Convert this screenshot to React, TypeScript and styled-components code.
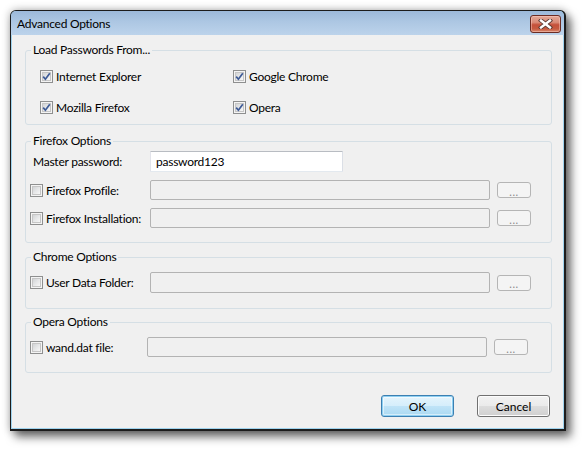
import React from "react";
import styled, { createGlobalStyle } from "styled-components";

const GlobalStyle = createGlobalStyle`
  html, body {
    margin: 0;
    padding: 0;
    background: #ffffff;
  }
  body {
    font-family: Lato, "Noto Sans", sans-serif;
    font-size: 12px;
    letter-spacing: -0.25px;
    color: #000000;
  }
`;

export default function App() {
  return (
    <>
      <GlobalStyle />
      <Page>
        <Window>
          <TitleBar>
            <TitleText>Advanced Options</TitleText>
            <CloseButton aria-label="Close">
              <svg width="17" height="10" viewBox="0 0 17 10">
                <path d="M4 1.5 L13 8.5 M13 1.5 L4 8.5" stroke="#5a3a34" strokeWidth="4.2" strokeLinecap="square" fill="none" />
                <path d="M4 1.5 L13 8.5 M13 1.5 L4 8.5" stroke="#ffffff" strokeWidth="2.4" strokeLinecap="square" fill="none" />
              </svg>
            </CloseButton>
          </TitleBar>

          <Client>
            <Group $top={7}>
              <Legend>Load Passwords From...</Legend>
              <GroupBody $pt={8} $pb={6} $pl={14}>
                <BrowserGrid>
                  <CheckLabel>
                    <CheckBox checked />
                    <CheckText>Internet Explorer</CheckText>
                  </CheckLabel>
                  <CheckLabel>
                    <CheckBox checked />
                    <CheckText>Google Chrome</CheckText>
                  </CheckLabel>
                  <CheckLabel>
                    <CheckBox checked />
                    <CheckText>Mozilla Firefox</CheckText>
                  </CheckLabel>
                  <CheckLabel>
                    <CheckBox checked />
                    <CheckText>Opera</CheckText>
                  </CheckLabel>
                </BrowserGrid>
              </GroupBody>
            </Group>

            <Group $top={8}>
              <Legend>Firefox Options</Legend>
              <GroupBody $pt={2} $pb={14} $pl={4}>
                <FieldRows>
                  <FieldRow $h={21}>
                    <LabelCell $w={120}>
                      <PlainLabel>Master password:</PlainLabel>
                    </LabelCell>
                    <TextBox $w={193} value="password123" readOnly />
                  </FieldRow>
                  <FieldRow $h={20}>
                    <LabelCell $w={120}>
                      <CheckBox />
                      <CheckText>Firefox Profile:</CheckText>
                    </LabelCell>
                    <DisabledBox $w={340} />
                    <BrowseButton disabled>...</BrowseButton>
                  </FieldRow>
                  <FieldRow $h={20}>
                    <LabelCell $w={120}>
                      <CheckBox />
                      <CheckText>Firefox Installation:</CheckText>
                    </LabelCell>
                    <DisabledBox $w={340} />
                    <BrowseButton disabled>...</BrowseButton>
                  </FieldRow>
                </FieldRows>
              </GroupBody>
            </Group>

            <Group $top={6}>
              <Legend>Chrome Options</Legend>
              <GroupBody $pt={7} $pb={15} $pl={4}>
                <FieldRow $h={21}>
                  <LabelCell $w={120}>
                    <CheckBox />
                    <CheckText>User Data Folder:</CheckText>
                  </LabelCell>
                  <DisabledBox $w={340} />
                  <BrowseButton disabled>...</BrowseButton>
                </FieldRow>
              </GroupBody>
            </Group>

            <Group $top={5}>
              <Legend>Opera Options</Legend>
              <GroupBody $pt={7} $pb={15} $pl={4}>
                <FieldRow $h={20}>
                  <LabelCell $w={117}>
                    <CheckBox />
                    <CheckText>wand.dat file:</CheckText>
                  </LabelCell>
                  <DisabledBox $w={340} />
                  <BrowseButton disabled>...</BrowseButton>
                </FieldRow>
              </GroupBody>
            </Group>

            <ButtonRow>
              <DialogButton $default>OK</DialogButton>
              <DialogButton>Cancel</DialogButton>
            </ButtonRow>
          </Client>
        </Window>
      </Page>
    </>
  );
}

function CheckBox({ checked }: { checked?: boolean }) {
  return (
    <Box>
      <BoxInner>
        {checked && (
          <svg width="9" height="9" viewBox="0 0 9 9">
            <path d="M1.2 4.6 L3.4 7.2 L7.8 1.2" stroke="#3d5a96" strokeWidth="1.7" fill="none" />
          </svg>
        )}
      </BoxInner>
    </Box>
  );
}

/* ── Page + window frame ── */
const Page = styled.div`
  box-sizing: border-box;
  min-height: 450px;
  padding: 10px 0 0 10px;
`;

const Window = styled.div`
  box-sizing: border-box;
  width: 556px;
  height: 421px;
  display: flex;
  flex-direction: column;
  border-style: solid;
  border-color: #1c1c1c;
  border-width: 1px 2px 2px 1px;
  border-radius: 6px 6px 0 0;
  background: #9fd3ee;
  padding: 0 1px 1px 1px;
  box-shadow: 5px 6px 10px rgba(0, 0, 0, 0.55), 0 0 8px rgba(0, 0, 0, 0.3);
`;

const TitleBar = styled.div`
  height: 24px;
  flex-shrink: 0;
  margin: 0 -1px;
  padding: 0 3px 0 6px;
  display: flex;
  align-items: flex-start;
  justify-content: space-between;
  border-radius: 5px 5px 0 0;
  background: linear-gradient(to bottom, #9cb9da 0%, #adc7e3 45%, #bcd3eb 100%);
`;

const TitleText = styled.span`
  font-size: 12px;
  line-height: 25px;
  color: #000000;
`;

const CloseButton = styled.button`
  width: 31px;
  height: 18px;
  margin-top: 4px;
  padding: 0;
  display: flex;
  align-items: center;
  justify-content: center;
  border: 1px solid #6b2b22;
  border-radius: 3px;
  background: linear-gradient(
    to bottom,
    #e4a897 0%,
    #d98a76 40%,
    #c5503a 55%,
    #c65a40 80%,
    #d98b70 100%
  );
  box-shadow: inset 0 0 0 1px rgba(255, 210, 200, 0.45);
  cursor: default;
`;

const Client = styled.div`
  flex: 1;
  display: flex;
  flex-direction: column;
  background: #f0f0f0;
  padding: 0 11px 11px 13px;
`;

/* ── Group boxes ── */
const Group = styled.fieldset<{ $top: number }>`
  margin: ${({ $top }) => $top}px 0 0 0;
  padding: 0;
  min-width: 0;
  border: 1px solid #d5dfe5;
  border-radius: 3px;
`;

const Legend = styled.legend`
  margin-left: 5px;
  padding: 0 2px;
  line-height: 16px;
  font-size: 12px;
`;

const GroupBody = styled.div<{ $pt: number; $pb: number; $pl: number }>`
  padding: ${({ $pt, $pb, $pl }) => `${$pt}px 0 ${$pb}px ${$pl}px`};
`;

const BrowserGrid = styled.div`
  display: grid;
  grid-template-columns: 193px 1fr;
  grid-auto-rows: 21px;
  row-gap: 10px;
`;

const FieldRows = styled.div`
  display: flex;
  flex-direction: column;
  gap: 8px;
`;

const FieldRow = styled.div<{ $h: number }>`
  height: ${({ $h }) => $h}px;
  display: flex;
  align-items: center;
`;

const LabelCell = styled.div<{ $w: number }>`
  width: ${({ $w }) => $w}px;
  flex-shrink: 0;
  display: flex;
  align-items: center;
  white-space: nowrap;
`;

const PlainLabel = styled.span`
  margin-left: 3px;
  font-size: 12px;
`;

const CheckLabel = styled.label`
  display: flex;
  align-items: center;
`;

const CheckText = styled.span`
  margin-left: 3px;
  font-size: 12px;
  white-space: nowrap;
`;

/* ── Checkbox ── */
const Box = styled.span`
  box-sizing: border-box;
  width: 13px;
  height: 13px;
  flex-shrink: 0;
  display: flex;
  align-items: center;
  justify-content: center;
  border: 1px solid #8e8f8f;
  background: #f4f4f4;
  padding: 1px;
`;

const BoxInner = styled.span`
  width: 9px;
  height: 9px;
  display: flex;
  align-items: center;
  justify-content: center;
  border: 1px solid #c6c6c6;
  box-sizing: border-box;
  background: linear-gradient(135deg, #d2d4d6 0%, #e6e7e8 50%, #f7f7f7 100%);

  svg {
    flex-shrink: 0;
  }
`;

/* ── Text boxes ── */
const TextBox = styled.input<{ $w: number }>`
  box-sizing: border-box;
  width: ${({ $w }) => $w}px;
  height: 21px;
  padding: 0 5px;
  border: 1px solid;
  border-color: #b8bcc2 #dbdfe6 #e3e9ef #e2e3ea;
  border-radius: 1px;
  background: #ffffff;
  font-family: Lato, "Noto Sans", sans-serif;
  font-size: 12px;
  letter-spacing: -0.25px;
  color: #000000;
  outline: none;
`;

const DisabledBox = styled.div<{ $w: number }>`
  box-sizing: border-box;
  width: ${({ $w }) => $w}px;
  height: 100%;
  border: 1px solid #b3b3b3;
  border-radius: 2px;
  background: #f0f0f0;
`;

const BrowseButton = styled.button`
  box-sizing: border-box;
  width: 34px;
  height: 16px;
  margin-left: 7px;
  padding: 3px 0 0 0;
  display: flex;
  align-items: center;
  justify-content: center;
  border: 1px solid #b5b5b5;
  border-radius: 3px;
  background: #f4f4f4;
  font-family: Lato, "Noto Sans", sans-serif;
  font-size: 11px;
  line-height: 10px;
  letter-spacing: 0.5px;
  color: #8a8a8a;
`;

/* ── Dialog buttons ── */
const ButtonRow = styled.div`
  display: flex;
  justify-content: flex-end;
  gap: 23px;
  margin-top: 22px;
  padding-right: 2px;
`;

const DialogButton = styled.button<{ $default?: boolean }>`
  box-sizing: border-box;
  width: 73px;
  height: 22px;
  padding: 0;
  border: 1px solid ${({ $default }) => ($default ? "#3c7fb1" : "#707070")};
  border-radius: 3px;
  background: ${({ $default }) =>
    $default
      ? "linear-gradient(to bottom, #e5f4fc 0%, #d6eefb 48%, #bfe3f7 52%, #aad9f2 100%)"
      : "linear-gradient(to bottom, #f2f2f2 0%, #ebebeb 48%, #dddddd 52%, #cfcfcf 100%)"};
  box-shadow: ${({ $default }) =>
    $default
      ? "inset 0 0 0 1px #8fd0f2, inset 0 0 0 2px rgba(255,255,255,0.5)"
      : "inset 0 0 0 1px #fcfcfc"};
  font-family: Lato, "Noto Sans", sans-serif;
  font-size: 12px;
  color: #000000;
  cursor: default;
`;
